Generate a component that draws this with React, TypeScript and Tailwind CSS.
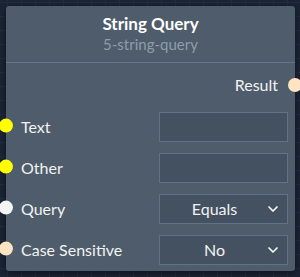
import { ChevronDown } from "lucide-react";

type Row = {
  label: string;
  dot: string;
  kind: "input" | "select";
  value?: string;
};

const rows: Row[] = [
  { label: "Text", dot: "bg-[#ffff00]", kind: "input" },
  { label: "Other", dot: "bg-[#ffff00]", kind: "input" },
  { label: "Query", dot: "bg-[#f4f4f5]", kind: "select", value: "Equals" },
  { label: "Case Sensitive", dot: "bg-[#ffe4c4]", kind: "select", value: "No" },
];

export default function App() {
  return (
    <div
      className="w-[300px] h-[277px] overflow-hidden pt-[6px] pl-[6px] bg-[#1b2434] bg-[linear-gradient(to_right,#222c40_1px,transparent_1px),linear-gradient(to_bottom,#222c40_1px,transparent_1px)] bg-[size:14px_14px] bg-[position:7px_2px]"
      style={{ fontFamily: "Lato, 'Noto Sans', sans-serif" }}
    >
      <div className="relative w-[289px] rounded-[3px] bg-[#4e5c6b] shadow-[0_2px_6px_rgba(0,0,0,0.5)]">
        <div className="flex flex-col items-center pt-[8px] pb-[8px] border-b border-[#637688]">
          <div className="text-[17px] leading-5 font-bold text-white">String Query</div>
          <div className="text-[15px] leading-5 text-[#8e9cab]">5-string-query</div>
        </div>

        <div className="pt-[10px] pb-[6px]">
          <div className="relative flex h-6 items-center justify-end pr-[17px]">
            <span className="text-[16px] text-[#f2f2f2]">Result</span>
            <span className="absolute right-[-7px] top-1/2 h-[14px] w-[14px] -translate-y-1/2 rounded-full bg-[#ffe4c4]" />
          </div>

          <div className="mt-[15px] flex flex-col gap-[11px]">
            {rows.map((row) => (
              <div key={row.label} className="relative flex h-[30px] items-center">
                <span
                  className={`absolute left-[-7px] top-1/2 h-[14px] w-[14px] -translate-y-[60%] rounded-full ${row.dot}`}
                />
                <span className="pl-[15px] text-[16px] text-[#f2f2f2]">{row.label}</span>
                <div className="ml-auto mr-[7px] flex h-[30px] w-[129px] items-center border border-[#607384] bg-[#435160]">
                  {row.kind === "select" && (
                    <>
                      <span className="flex-1 pl-[4px] text-center text-[16px] text-[#f2f2f2]">
                        {row.value}
                      </span>
                      <ChevronDown className="mr-[6px] h-[16px] w-[16px] text-white" strokeWidth={2.5} />
                    </>
                  )}
                </div>
              </div>
            ))}
          </div>
        </div>
      </div>
    </div>
  );
}
